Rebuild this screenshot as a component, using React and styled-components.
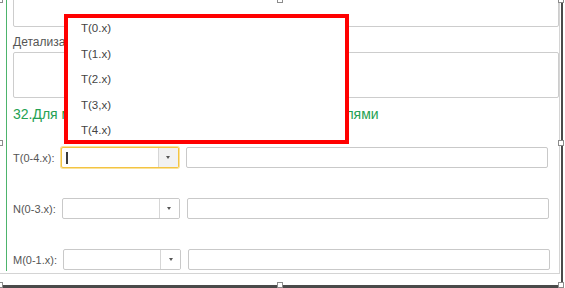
import React from 'react';
import styled, { createGlobalStyle } from 'styled-components';

const GlobalStyle = createGlobalStyle`
  *, *::before, *::after { box-sizing: border-box; }
  html, body {
    margin: 0;
    padding: 0;
    background: #fff;
    overflow: hidden;
  }
  body {
    font-family: "Liberation Sans", Arial, sans-serif;
  }
`;

const Frame = styled.div`
  position: relative;
  width: 563px;
  height: 288px;
  border-right: 2px solid #4a4a4a;
  border-bottom: 3px solid #4a4a4a;
`;

const Handle = styled.span`
  position: absolute;
  left: ${p => p.$x - 3}px;
  top: ${p => p.$y - 3}px;
  width: 6px;
  height: 6px;
  background: #fff;
  border: 1px solid #8c8c8c;
`;

const Form = styled.div`
  width: 560px;
  height: 274px;
  padding: 0 0 2px 6px;
  border-right: 1px solid #d4d4d4;
  border-bottom: 1px solid #d4d4d4;
`;

const Group = styled.div`
  height: 100%;
  display: flex;
  flex-direction: column;
  border-left: 1px solid #4db46c;
  padding-left: 6px;
`;

const TextBox = styled.div`
  height: ${p => p.$h}px;
  border: 1px solid #cdcdcd;
  border-radius: 2px;
  background: #fff;
`;

const TopBox = styled(TextBox)`
  margin-top: -13px;
`;

const FieldLabel = styled.div`
  margin: 8px 0 2px;
  font-size: 12px;
  line-height: 15px;
  color: #555;
`;

const Heading = styled.div`
  margin-top: 7px;
  font-size: 14px;
  line-height: 18px;
  color: #24a152;
  white-space: nowrap;
`;

const Rows = styled.div`
  margin-top: 23px;
  display: flex;
  flex-direction: column;
  gap: 28px;
`;

const Row = styled.div`
  display: flex;
  align-items: center;
  height: 23px;
`;

const RowLabel = styled.span`
  font-size: 11px;
  color: #555;
  margin-right: 6px;
  white-space: nowrap;
`;

const Combo = styled.div`
  display: flex;
  width: 118px;
  height: 21px;
  border: 1px solid ${p => (p.$focused ? '#f3c443' : '#c9c9c9')};
  box-shadow: ${p => (p.$focused ? '0 0 0 1px #fbe29a' : 'none')};
  border-radius: 2px;
  background: #fff;
  overflow: hidden;
`;

const ComboText = styled.div`
  flex: 1;
  display: flex;
  align-items: center;
  padding-left: 4px;
`;

const Caret = styled.span`
  width: 2px;
  height: 12px;
  background: #3a3a3a;
`;

const ComboButton = styled.div`
  width: 20px;
  display: flex;
  align-items: center;
  justify-content: center;
  border-left: 1px solid #d6d6d6;
  background: ${p => (p.$focused ? '#f2f2f2' : '#fff')};
  &::after {
    content: '';
    border-left: 2.5px solid transparent;
    border-right: 2.5px solid transparent;
    border-top: 3px solid #555;
  }
`;

const Input = styled.div`
  width: 362px;
  height: 21px;
  margin-left: 7px;
  border: 1px solid #c9c9c9;
  border-radius: 2px;
  background: #fff;
`;

const Popup = styled.div`
  position: absolute;
  left: 64px;
  top: 14px;
  width: 285px;
  height: 130px;
  border: 4px solid #ff0000;
  background: #fff;
  overflow: hidden;
`;

const ItemList = styled.ul`
  list-style: none;
  margin: -2px 0 0;
  padding: 0;
`;

const Item = styled.li`
  padding-left: 13px;
  font-size: 11.5px;
  line-height: 25.5px;
  color: #444;
`;

const rows = [
  { label: 'T(0-4.x):', focused: true },
  { label: 'N(0-3.x):' },
  { label: 'M(0-1.x):' },
];

const items = ['T(0.x)', 'T(1.x)', 'T(2.x)', 'T(3,x)', 'T(4.x)'];

const handles = [
  [0, 0], [280, 0], [561, 0],
  [0, 143], [561, 143],
  [0, 285], [280, 285], [561, 285],
];

export default function App() {
  return (
    <>
      <GlobalStyle />
      <Frame>
        <Form>
          <Group>
            <TopBox $h={40} />
            <FieldLabel>Детализация:</FieldLabel>
            <TextBox $h={46} />
            <Heading>32.Для мужчин с первично-множественными опухолями</Heading>
            <Rows>
              {rows.map(r => (
                <Row key={r.label}>
                  <RowLabel>{r.label}</RowLabel>
                  <Combo $focused={r.focused}>
                    <ComboText>{r.focused && <Caret />}</ComboText>
                    <ComboButton $focused={r.focused} />
                  </Combo>
                  <Input />
                </Row>
              ))}
            </Rows>
          </Group>
        </Form>
        <Popup>
          <ItemList>
            {items.map(t => (
              <Item key={t}>{t}</Item>
            ))}
          </ItemList>
        </Popup>
        {handles.map(([x, y]) => (
          <Handle key={`${x}-${y}`} $x={x} $y={y} />
        ))}
      </Frame>
    </>
  );
}
